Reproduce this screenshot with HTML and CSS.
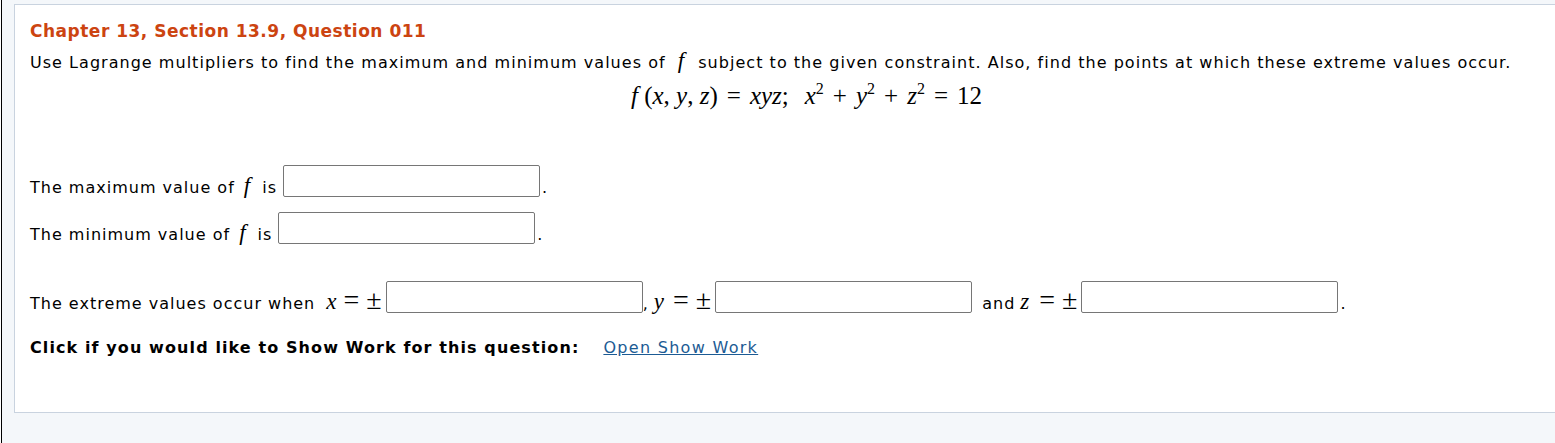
FILE: index.html
```html
<!DOCTYPE html>
<html>
<head>
<meta charset="utf-8">
<link rel="stylesheet" href="styles.css">
</head>
<body>
<div class="page">
  <div class="panel">
    <h2 class="title">Chapter 13, Section 13.9, Question 011</h2>
    <p class="prompt">Use Lagrange multipliers to find the maximum and minimum values of <span class="mi f">f</span> subject to the given constraint. Also, find the points at which these extreme values occur.</p>
    <div class="formula"><span class="mi">f</span> (<span class="mi">x</span>, <span class="mi">y</span>, <span class="mi">z</span>)<span class="mo">=</span><span class="mi">xyz</span>;<span class="gap"></span><span class="mi">x</span><sup>2</sup><span class="mo">+</span><span class="mi">y</span><sup>2</sup><span class="mo">+</span><span class="mi">z</span><sup>2</sup><span class="mo">=</span>12</div>

    <div class="answers">
      <div class="row"><span class="lbl">The maximum value of <span class="mi fx">f</span>is</span><input class="box" type="text"><span class="lbl dot">.</span></div>
      <div class="row"><span class="lbl">The minimum value of <span class="mi fx">f</span>is</span><input class="box" type="text"><span class="lbl dot">.</span></div>
    </div>

    <div class="row extreme"><span class="lbl">The extreme values occur when <span class="mi var">x</span><span class="op">=</span><span class="op pm">±</span></span><input class="box" type="text"><span class="lbl">,<span class="mi var">y</span><span class="op eq-y">=</span><span class="op pm">±</span></span><input class="box" type="text"><span class="lbl and">and<span class="mi var">z</span><span class="op eq-z">=</span><span class="op pm">±</span></span><input class="box" type="text"><span class="lbl dot">.</span></div>

    <div class="showwork"><strong class="cta">Click if you would like to Show Work for this question:</strong><a class="link" href="#">Open Show Work</a></div>
  </div>
</div>
</body>
</html>
```

FILE: styles.css
```css
html {
  background: #ffffff;
  overflow: hidden;
}
body {
  margin: 0 0 0 1px;
  border-left: 1px solid #000000;
  background: #f4f7fa;
  height: 443px;
  font-family: "DejaVu Sans", Verdana, sans-serif;
  font-size: 16px;
  color: #000000;
}
.page {
  padding-top: 4px;
  padding-left: 12px;
}
.panel {
  width: 1540px;
  height: 376px;
  background: #ffffff;
  border: 1px solid #c9d3df;
  padding: 16px 15px 15px 15px;
}
.title {
  margin: 0;
  font-size: 17px;
  line-height: 20px;
  font-weight: bold;
  letter-spacing: 0.5px;
  color: #cc4411;
}
.prompt {
  margin: 12px 0 0 0;
  line-height: 20px;
  letter-spacing: 1.03px;
}
.mi {
  font-family: "Liberation Serif", "Times New Roman", serif;
  font-style: italic;
  font-size: 23px;
  letter-spacing: 0;
  line-height: 0;
}
.prompt .f {
  margin: 0 8px 0 6px;
}
.formula {
  margin-top: 8px;
  padding-left: 13px;
  text-align: center;
  font-family: "Liberation Serif", "Times New Roman", serif;
  font-size: 25px;
  line-height: 30px;
}
.formula .mi {
  font-size: 25px;
}
.formula sup {
  font-size: 16px;
  vertical-align: 10px;
  line-height: 0;
}
.mo {
  margin: 0 9px;
}
.gap {
  display: inline-block;
  width: 16px;
}
.answers {
  margin-top: 54px;
  display: flex;
  flex-direction: column;
  gap: 15px;
}
.row {
  display: flex;
  align-items: flex-end;
}
.lbl {
  line-height: 18px;
  letter-spacing: 1px;
  white-space: nowrap;
}
.fx {
  margin: 0 12px 0 3px;
}
.box {
  width: 257px;
  height: 32px;
  box-sizing: border-box;
  border: 1px solid #767676;
  border-radius: 2px;
  margin: 0 0 0 6px;
  padding: 0;
  background: #ffffff;
}
.dot {
  margin-left: 2px;
}
.extreme {
  margin-top: 37px;
}
.extreme .box {
  margin-left: 4px;
}
.var {
  margin-left: 5px;
}
.op {
  font-family: "Liberation Serif", "Times New Roman", serif;
  font-size: 28px;
  line-height: 0;
  letter-spacing: 0;
  margin-left: 7px;
}
.eq-y {
  margin-left: 9px;
}
.eq-z {
  margin-left: 10px;
}
.pm {
  margin-left: 7px;
}
.and {
  margin-left: 10px;
}
.showwork {
  margin-top: 25px;
  display: flex;
  align-items: baseline;
  line-height: 20px;
}
.cta {
  letter-spacing: 1.1px;
}
.link {
  margin-left: 24px;
  color: #1c5b94;
  letter-spacing: 1.3px;
  text-decoration: underline;
}
```
